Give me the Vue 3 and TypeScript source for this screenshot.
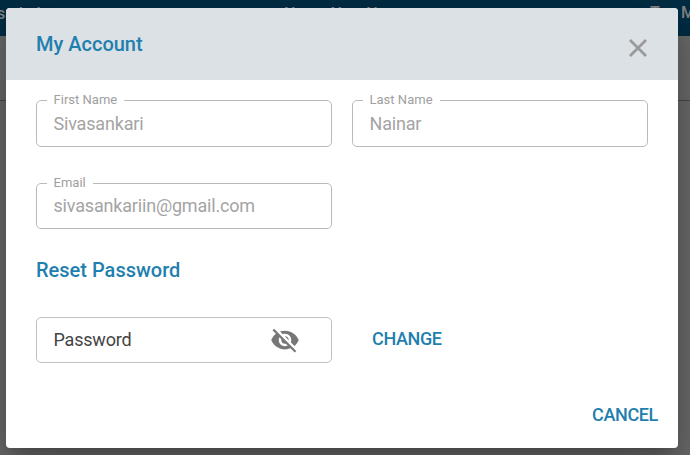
<script setup lang="ts">
interface Field {
  id: string
  label: string
  value: string
}

const fields: Field[] = [
  { id: 'first', label: 'First Name', value: 'Sivasankari' },
  { id: 'last', label: 'Last Name', value: 'Nainar' },
  { id: 'email', label: 'Email', value: 'sivasankariin@gmail.com' },
]
</script>

<template>
  <div class="page">
    <div class="topbar">
      <span class="nav nav-left">sadad</span>
      <span class="nav nav-mid">Name New Now</span>
      <span class="nav nav-right">T</span>
      <span class="nav nav-end">M</span>
    </div>
    <div class="subbar"></div>

    <section class="dialog">
      <header class="head">
        <h1 class="title">My Account</h1>
        <svg class="close" viewBox="0 0 20 20">
          <path d="M2 2 18 18M18 2 2 18" />
        </svg>
      </header>
      <div class="body">
        <div class="grid">
          <fieldset v-for="f in fields" :key="f.id" class="field" :class="f.id">
            <legend>{{ f.label }}</legend>
            <span class="value">{{ f.value }}</span>
          </fieldset>
        </div>
        <h2 class="subtitle">Reset Password</h2>
        <div class="row">
          <div class="password">
            <span class="ptext">Password</span>
            <svg class="eye" viewBox="0 0 24 24">
              <path d="M12 7c2.76 0 5 2.24 5 5 0 .65-.13 1.26-.36 1.83l2.92 2.92c1.51-1.26 2.7-2.89 3.43-4.75-1.73-4.39-6-7.5-11-7.5-1.4 0-2.74.25-3.98.7l2.16 2.16C10.74 7.13 11.35 7 12 7zM2 4.27l2.28 2.28.46.46C3.08 8.3 1.78 10.02 1 12c1.73 4.39 6 7.5 11 7.5 1.55 0 3.03-.3 4.38-.84l.42.42L19.73 22 21 20.73 3.27 3 2 4.27zM7.53 9.8l1.55 1.55c-.05.21-.08.43-.08.65 0 1.66 1.34 3 3 3 .22 0 .44-.03.65-.08l1.55 1.55c-.67.33-1.41.53-2.2.53-2.76 0-5-2.24-5-5 0-.79.2-1.53.53-2.2zm4.31-.78l3.15 3.15.02-.16c0-1.66-1.34-3-3-3l-.17.01z" />
            </svg>
          </div>
          <button class="link" type="button">CHANGE</button>
        </div>
        <footer class="foot">
          <button class="link" type="button">CANCEL</button>
        </footer>
      </div>
    </section>
  </div>
</template>

<style>
body {
  margin: 0;
  overflow: hidden;
}
</style>

<style scoped>
.page {
  position: relative;
  box-sizing: border-box;
  width: 690px;
  height: 455px;
  overflow: hidden;
  background: #6a6a6a;
  font-family: Roboto, "Liberation Sans", sans-serif;
}
.topbar {
  position: relative;
  height: 36px;
  background: #002d44;
}
.nav {
  position: absolute;
  top: 4px;
  font-size: 16px;
  line-height: 20px;
  font-weight: 500;
  color: #858585;
  white-space: nowrap;
}
.nav-left { left: -3px; }
.nav-mid { left: 284px; }
.nav-right { left: 650px; top: 3px; }
.nav-end { left: 681px; top: 3px; }
.subbar {
  height: 64px;
  border-bottom: 1px solid #474747;
}
.dialog {
  position: absolute;
  left: 6px;
  top: 8px;
  width: 672px;
  height: 440px;
  border-radius: 4px;
  overflow: hidden;
  background: #fff;
  box-shadow: 0 11px 15px -7px rgba(0, 0, 0, 0.2), 0 24px 38px 3px rgba(0, 0, 0, 0.14), 0 9px 46px 8px rgba(0, 0, 0, 0.12);
}
.head {
  display: flex;
  justify-content: space-between;
  box-sizing: border-box;
  height: 72px;
  padding: 22px 30px 0;
  background: #dce1e5;
}
.title,
.subtitle {
  margin: 0;
  font-size: 20px;
  line-height: 28px;
  font-weight: 500;
  color: #1f7fae;
}
.close {
  width: 20px;
  height: 20px;
  margin-top: 8px;
  fill: none;
  stroke: #999;
  stroke-width: 2.7;
}
.body {
  padding: 13px 30px 0;
}
.grid {
  display: grid;
  grid-template-columns: 296px 296px;
  grid-template-rows: 54px 53px;
  gap: 29px 20px;
}
.field {
  box-sizing: border-box;
  min-width: 0;
  height: 54px;
  margin: 0;
  padding: 0 7px;
  border: 1px solid #bababa;
  border-radius: 5px;
}
.email {
  height: 53px;
}
.field legend {
  height: 14px;
  margin-left: 3px;
  padding: 0 7px 0 6.5px;
  font-size: 13px;
  line-height: 14px;
  letter-spacing: 0.02px;
  color: #a0a0a0;
}
.value {
  display: block;
  padding: 6px 0 0 9.5px;
  font-size: 18px;
  line-height: 22px;
  letter-spacing: -0.18px;
  color: #a4a4a4;
}
.email .value {
  padding-top: 5px;
}
.subtitle {
  margin-top: 27px;
}
.row {
  display: flex;
  margin-top: 33px;
}
.password {
  display: flex;
  align-items: center;
  justify-content: space-between;
  box-sizing: border-box;
  width: 296px;
  height: 46px;
  padding: 0 31px 0 16.5px;
  border: 1px solid #c0c0c0;
  border-radius: 5px;
}
.ptext {
  padding-bottom: 2px;
  font-size: 18px;
  letter-spacing: -0.2px;
  color: #444;
}
.eye {
  width: 30px;
  height: 30px;
  fill: #777;
}
.link {
  padding: 0;
  border: 0;
  background: none;
  font-family: inherit;
  font-size: 18px;
  line-height: 24px;
  font-weight: 500;
  letter-spacing: -0.36px;
  color: #1f7fae;
}
.row .link {
  height: 24px;
  margin: 10px 0 0 40px;
}
.foot {
  display: flex;
  justify-content: flex-end;
  margin: 40px -10px 0 0;
}
</style>
